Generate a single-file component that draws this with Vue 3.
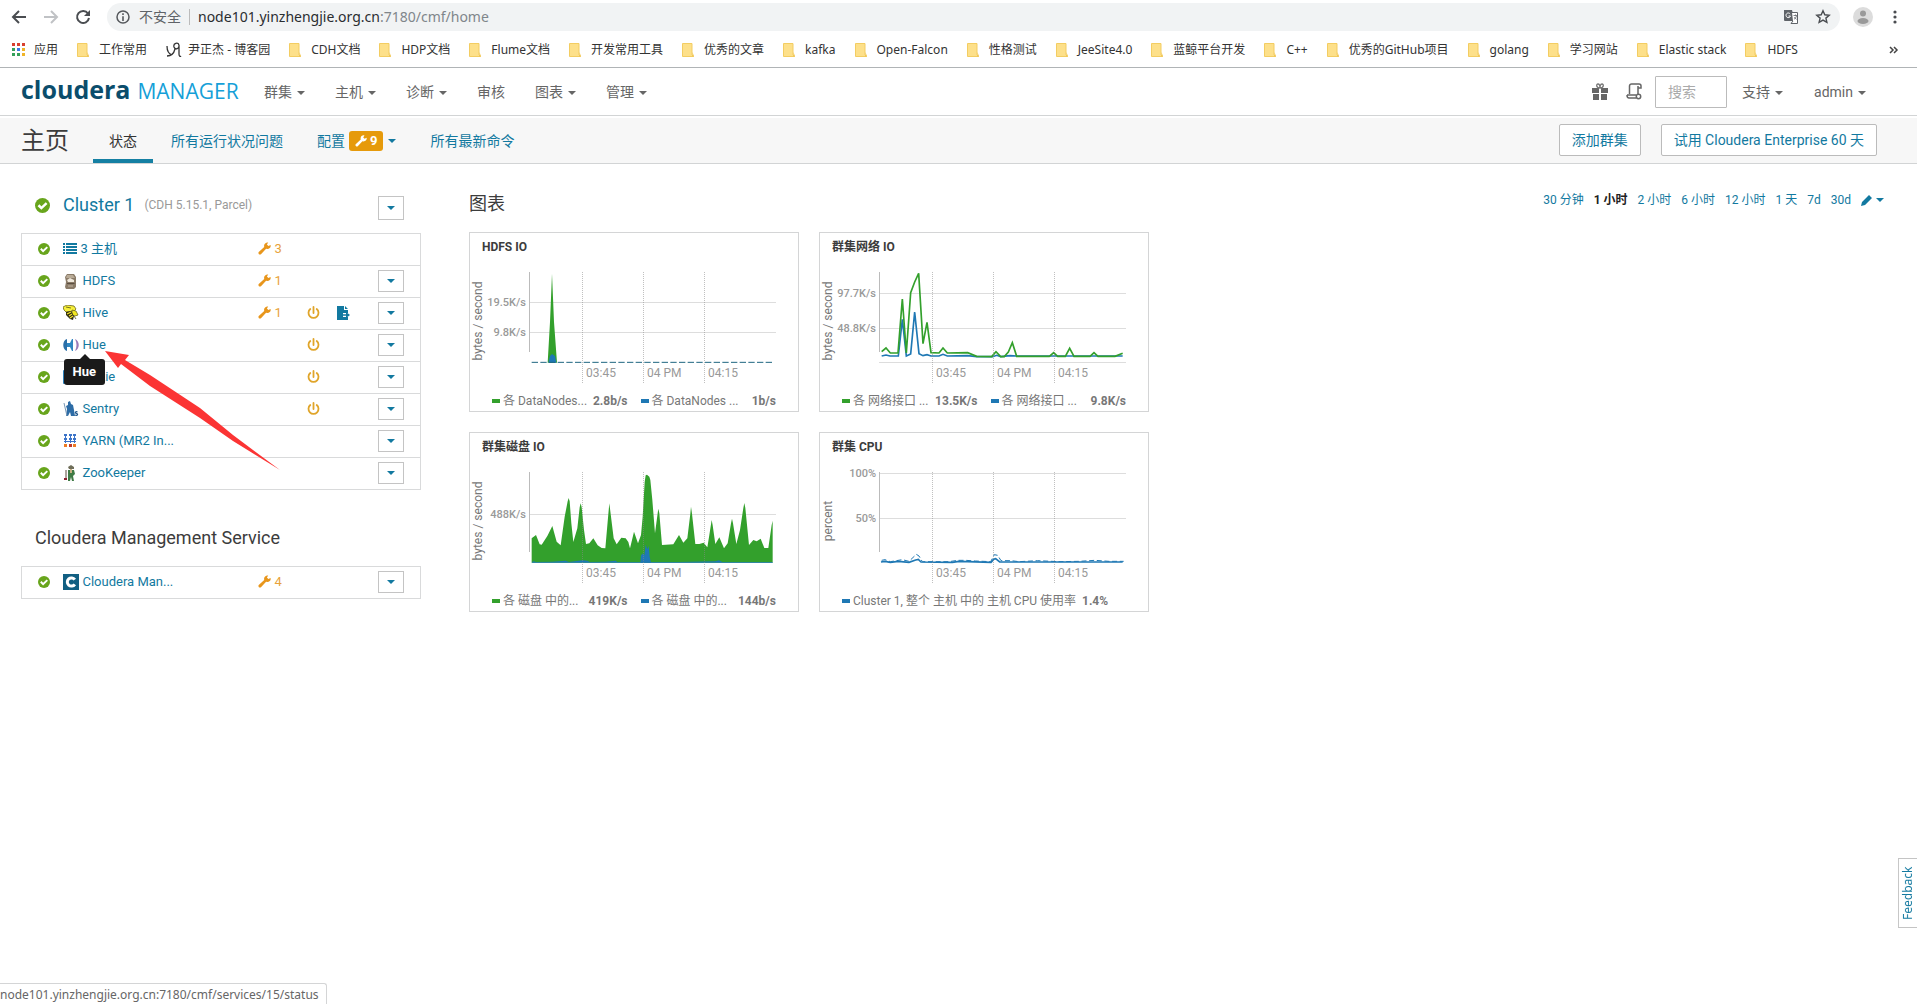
<script setup>
const bookmarks = [
  '工作常用', '尹正杰 - 博客园', 'CDH文档', 'HDP文档', 'Flume文档', '开发常用工具', '优秀的文章', 'kafka',
  'Open-Falcon', '性格测试', 'JeeSite4.0', '蓝鲸平台开发', 'C++', '优秀的GitHub项目', 'golang', '学习网站',
  'Elastic stack', 'HDFS'
]

const menus = [
  { label: '群集', caret: true },
  { label: '主机', caret: true },
  { label: '诊断', caret: true },
  { label: '审核', caret: false },
  { label: '图表', caret: true },
  { label: '管理', caret: true }
]

const groups = [
  {
    id: 'cluster',
    title: 'Cluster 1',
    note: '(CDH 5.15.1, Parcel)',
    rows: [
      { id: 'hosts', name: '3 主机', issues: 3 },
      { id: 'hdfs', name: 'HDFS', issues: 1, menu: true },
      { id: 'hive', name: 'Hive', issues: 1, restart: true, deploy: true, menu: true },
      { id: 'hue', name: 'Hue', restart: true, menu: true, tip: true },
      { id: 'oozie', name: 'Oozie', restart: true, menu: true },
      { id: 'sentry', name: 'Sentry', restart: true, menu: true },
      { id: 'yarn', name: 'YARN (MR2 In...', menu: true },
      { id: 'zookeeper', name: 'ZooKeeper', menu: true }
    ]
  },
  {
    id: 'mgmt',
    title: 'Cloudera Management Service',
    rows: [{ id: 'cm', name: 'Cloudera Man...', issues: 4, menu: true }]
  }
]

const ranges = ['30 分钟', '1 小时', '2 小时', '6 小时', '12 小时', '1 天', '7d', '30d']
const activeRange = '1 小时'

const ticks = [
  { x: 113, label: '03:45' },
  { x: 174, label: '04 PM' },
  { x: 235, label: '04:15' }
]

const green = '#33a02c'
const blue = '#1f78b4'

const charts = [
  {
    title: 'HDFS IO',
    unit: 'bytes / second',
    unitY: 89,
    grid: [{ y: 70, label: '19.5K/s' }, { y: 100, label: '9.8K/s' }],
    areas: [
      { fill: green, points: '56,272 63,150 69,5 75,150 84,272' },
      { fill: blue, points: '58,272 63,252 69,246 78,252 82,272' }
    ],
    lines: [{ color: '#1d6680', width: 3, dash: '19 7', points: '8,271 734,271' }],
    legend: [
      { color: green, label: '各 DataNodes...', value: '2.8b/s' },
      { color: blue, label: '各 DataNodes ...', value: '1b/s' }
    ]
  },
  {
    title: '群集网络 IO',
    unit: 'bytes / second',
    unitY: 89,
    grid: [{ y: 61, label: '97.7K/s' }, { y: 96, label: '48.8K/s' }, { y: 130, label: '' }],
    areas: [],
    lines: [
      { color: blue, width: 5, points: '8,252 21,249 33,252 58,252 70,142 82,252 95,246 107,120 120,245 132,251 144,248 156,252 180,252 192,247 205,252 266,251 293,254 341,254 353,250 365,254 393,251 413,252 731,252' },
      { color: green, width: 5, points: '8,239 21,228 34,243 57,243 70,81 82,243 95,62 107,30 119,4 132,215 144,151 156,242 180,243 192,228 205,243 266,242 293,253 338,254 351,239 365,254 376,254 388,240 400,212 413,253 511,253 524,242 536,253 559,253 572,229 585,253 633,253 645,242 657,253 708,253 731,244' }
    ],
    legend: [
      { color: green, label: '各 网络接口 ...', value: '13.5K/s' },
      { color: blue, label: '各 网络接口 ...', value: '9.8K/s' }
    ]
  },
  {
    title: '群集磁盘 IO',
    unit: 'bytes / second',
    unitY: 89,
    grid: [{ y: 82, label: '488K/s' }],
    areas: [
      { fill: green, points: '8,199 21,189 32,217 38,218 55,192 70,162 83,209 95,220 107,134 116,88 119,78 122,88 127,154 133,210 145,169 152,106 155,94 158,106 165,174 171,216 181,214 193,199 206,220 218,228 229,229 238,126 241,94 245,126 254,199 263,217 277,197 290,199 298,210 303,229 315,179 327,214 336,189 341,134 347,30 350,10 354,8 361,14 364,24 370,84 378,184 386,124 388,110 391,124 399,219 433,217 450,189 463,212 475,199 484,125 486,104 489,125 499,216 511,216 524,212 535,226 541,189 548,144 551,160 559,216 571,196 585,229 596,214 606,154 609,140 612,154 622,216 633,174 643,108 646,93 649,108 660,219 673,204 683,208 695,200 706,228 718,228 728,159 731,146 731,272 8,272' },
      { fill: blue, points: '334,272 336,250 342,244 346,250 350,218 355,232 359,222 362,254 366,272' },
      { fill: blue, points: '8,272 12,268 22,270 70,269 110,266 120,270 160,265 175,266 182,270 230,269 260,266 265,270 450,270 560,268 570,265 580,270 731,270 731,272' }
    ],
    lines: [],
    legend: [
      { color: green, label: '各 磁盘 中的...', value: '419K/s' },
      { color: blue, label: '各 磁盘 中的...', value: '144b/s' }
    ]
  },
  {
    title: '群集 CPU',
    unit: 'percent',
    unitY: 89,
    grid: [{ y: 41, label: '100%' }, { y: 86, label: '50%' }],
    areas: [],
    lines: [
      { color: blue, width: 3, dash: '15 8', points: '8,265 18,263 34,269 70,263 90,268 112,247 120,252 130,269 210,269 236,265 260,265 290,267 335,269 346,248 356,250 366,266 396,266 420,269 476,266 540,269 600,268 648,265 690,268 734,268' },
      { color: blue, width: 5, points: '6,270 18,268 34,271 58,268 90,271 110,264 118,262 126,270 220,271 240,268 336,271 344,262 350,260 362,270 476,270 648,270 731,270' }
    ],
    legend: [{ color: blue, label: 'Cluster 1, 整个 主机 中的 主机 CPU 使用率', value: '1.4%' }]
  }
]
</script>

<template>
  <div class="page">
    <header class="browser">
      <div class="toolbar">
        <button class="plain" aria-label="返回">
          <svg width="16" height="16" viewBox="0 0 16 16" fill="none" stroke="#4a4d51" stroke-width="2"><path d="M15 8H2M8 2L2 8l6 6" /></svg>
        </button>
        <button class="plain" aria-label="前进">
          <svg width="16" height="16" viewBox="0 0 16 16" fill="none" stroke="#c0c2c5" stroke-width="2"><path d="M1 8h13M8 2l6 6-6 6" /></svg>
        </button>
        <button class="plain" aria-label="刷新">
          <svg width="16" height="16" viewBox="0 0 16 16"><path d="M13 4.500A6 6 0 1 0 14 9" fill="none" stroke="#4a4d51" stroke-width="2" /><path d="M15 1v6H9z" fill="#4a4d51" /></svg>
        </button>
        <div class="address">
          <svg width="14" height="14" viewBox="0 0 14 14"><circle cx="7" cy="7" r="6" fill="none" stroke="#55585c" stroke-width="1.500" /><path d="M6.200 6.200h1.600V11H6.200zM6.200 3.200h1.600v1.700H6.200z" fill="#55585c" /></svg>
          <span class="unsafe">不安全</span>
          <span class="url"><b>node101.yinzhengjie.org.cn</b>:7180/cmf/home</span>
          <svg class="translate" width="16" height="16" viewBox="0 0 16 16"><path d="M1 1h8l3 11H2a1 1 0 0 1-1-1z" fill="#5f6368" /><path d="M9 3.500h5.500v11H8l2-2.500" fill="#fff" stroke="#5f6368" /><path d="M7.200 5A2.300 2.300 0 1 0 7.500 7H5.500" fill="none" stroke="#fff" /><path d="M10.500 6.500h3.500M12.500 5.500v1M13.500 7c-.5 1.700-1.500 2.700-2.500 3.300M11.300 8l2.300 2.500" fill="none" stroke="#5f6368" stroke-width=".8" /></svg>
          <svg width="16" height="16" viewBox="0 0 16 16"><path d="M8 1.800l1.800 4 4.400.4-3.300 2.900 1 4.300L8 11.100l-3.900 2.300 1-4.300L1.800 6.200l4.400-.4z" fill="none" stroke="#4a4d51" stroke-width="1.400" /></svg>
        </div>
        <button class="plain profile" aria-label="用户">
          <svg width="20" height="20" viewBox="0 0 20 20"><circle cx="10" cy="10" r="10" fill="#dcdcdc" /><circle cx="10" cy="6.500" r="3" fill="#999" /><ellipse cx="10" cy="14" rx="5.500" ry="3" fill="#999" /></svg>
        </button>
        <button class="plain" aria-label="更多">
          <svg width="4" height="16" viewBox="0 0 4 16" fill="#4a4d51"><circle cx="2" cy="3" r="1.600" /><circle cx="2" cy="8" r="1.600" /><circle cx="2" cy="13" r="1.600" /></svg>
        </button>
      </div>
      <nav class="bookmarks">
        <a href="#" class="bookmark apps">
          <svg width="13" height="13" viewBox="0 0 13 13">
            <path d="M0 0h3v3H0zM5 0h3v3H5zM10 0h3v3h-3z" fill="#d8402f" />
            <path d="M0 5h3v3H0zM0 10h3v3H0z" fill="#35a05a" /><path d="M5 5h3v3H5z" fill="#3b78e7" /><path d="M10 5h3v3h-3zM10 10h3v3h-3z" fill="#f0b429" /><path d="M5 10h3v3H5z" fill="#35a05a" />
          </svg>
          应用
        </a>
        <a v-for="(b, i) in bookmarks" :key="b" href="#" class="bookmark">
          <svg v-if="i === 1" width="16" height="16" viewBox="0 0 16 16" fill="none" stroke="#333" stroke-width="1.300"><path d="M1 4c0 5 2 8 5 9M13 3c-1-3-6-2-5 2 1 3 5 2 5-1M13 3v9c0 2 1 3 2 2M1 14c4 0 7-3 8-7" /></svg>
          <svg v-else width="16" height="16" viewBox="0 0 16 16"><path d="M.5 1.500h9.500v11l1.500 2H.5z" fill="#fde08a" stroke="#f3cd62" /><path d="M10.500 10v4.500h1.500z" fill="#f0c040" /></svg>
          {{ b }}
        </a>
        <button class="plain more" aria-label="更多书签">
          <svg width="10" height="8" viewBox="0 0 10 8" fill="none" stroke="#444" stroke-width="1.500"><path d="M1 1l3 3-3 3M5 1l3 3-3 3" /></svg>
        </button>
      </nav>
    </header>

    <div class="navbar">
      <a href="#" class="logo"><span class="brand">cloudera</span><span class="product">MANAGER</span></a>
      <nav class="menus">
        <a v-for="m in menus" :key="m.label" href="#">{{ m.label }}<i v-if="m.caret" class="caret"></i></a>
      </nav>
      <div class="tools">
        <a href="#" aria-label="包裹">
          <svg width="16" height="18" viewBox="0 0 16 18" fill="#666"><path d="M0 5h7v5H0zM9 5h7v5H9zM1 11h6v6H1zM9 11h6v6H9z" /><path d="M8 5C4 5 4 1 6 1s2 4 2 4 0-4 2-4 2 4-2 4z" fill="none" stroke="#777" stroke-width="1.300" /></svg>
        </a>
        <a href="#" aria-label="运行命令">
          <svg width="16" height="17" viewBox="0 0 16 17" fill="none" stroke="#666" stroke-width="1.500"><path d="M3.500 11V3a2 2 0 0 1 2-2H13a2 2 0 0 1 2 2v2h-3M12 3v8M1 12h9M1 12c0 2 1 3 2 3h7" /><circle cx="12.500" cy="13.500" r="2.200" /></svg>
        </a>
        <input type="search" placeholder="搜索" aria-label="搜索" />
        <a href="#" class="text">支持<i class="caret"></i></a>
        <a href="#" class="text user">admin<i class="caret"></i></a>
      </div>
    </div>

    <div class="subbar">
      <h1>主页</h1>
      <nav class="tabs">
        <a href="#" class="active">状态</a>
        <a href="#">所有运行状况问题</a>
        <a href="#">配置<span class="badge"><svg width="12" height="12" viewBox="0 0 14 14"><path d="M13.500 3.200l-2.300 1.200-1.600-1.600L11 .5C9 0 6.500 1.500 6.500 4l.2 1.300L.8 10.800c-1.200 1.400.9 3.600 2.400 2.400l5.500-5.900 1.300.2c2.700 0 4.200-2.300 3.500-4.300z" fill="#fff" /></svg>9</span><i class="caret"></i></a>
        <a href="#">所有最新命令</a>
      </nav>
      <div class="actions">
        <button>添加群集</button>
        <button>试用 Cloudera Enterprise 60 天</button>
      </div>
    </div>

    <main>
      <aside>
        <section v-for="g in groups" :key="g.id" :class="g.id">
          <div class="group-head">
            <svg v-if="g.note" class="ok" width="15" height="15" viewBox="0 0 12 12"><circle cx="6" cy="6" r="6" fill="#68a51c" /><path d="M2.800 5.800l2.300 2.300 4.200-4" fill="none" stroke="#fff" stroke-width="2" /></svg>
            <h2><a v-if="g.note" href="#">{{ g.title }}</a><template v-else>{{ g.title }}</template></h2>
            <span v-if="g.note" class="note">{{ g.note }}</span>
            <button v-if="g.note" class="drop tall" aria-label="群集操作"><i class="caret"></i></button>
          </div>
          <table>
            <colgroup><col class="c-state" /><col class="c-name" /><col class="c-issues" /><col class="c-icon" /><col class="c-deploy" /><col /></colgroup>
            <tbody>
              <tr v-for="r in g.rows" :key="r.id">
                <td class="state"><svg width="12" height="12" viewBox="0 0 12 12"><circle cx="6" cy="6" r="6" fill="#68a51c" /><path d="M2.800 5.800l2.300 2.300 4.200-4" fill="none" stroke="#fff" stroke-width="2" /></svg></td>
                <td>
                  <a href="#" class="service">
                    <svg v-if="r.id === 'hosts'" width="14" height="11" viewBox="0 0 14 11" fill="#1279a0"><path d="M0 0h2v2H0zM3 0h11v2H3zM0 3h2v2H0zM3 3h11v2H3zM0 6h2v2H0zM3 6h11v2H3zM0 9h2v2H0zM3 9h11v2H3z" /></svg>
                    <svg v-else-if="r.id === 'hdfs'" width="16" height="16" viewBox="0 0 16 16"><path d="M4 1h7l2 3v10l-2 2H3l-1-2 1-5-1-5z" fill="#8a7b68" /><path d="M4 2h6l2 3H3z" fill="#b9ab97" /><path d="M4 7l3-2 4 2v2H5z" fill="#efe8dc" /><path d="M4 10h7l1 1H4z" fill="#5b4e40" /><path d="M5 13h5" stroke="#c2b5a3" /></svg>
                    <svg v-else-if="r.id === 'hive'" width="16" height="16" viewBox="0 0 16 16"><path d="M0 2l4-2 7 1 2 3-2 2-8 1-2-2z" fill="#f7f03a" stroke="#6b6620" stroke-width=".8" /><path d="M9 5l4 1 2 4-3 1-3-1z" fill="#f2e71f" stroke="#6b6620" stroke-width=".8" /><path d="M3 7l5-1 3 5-1 4-3-1-4-4z" fill="#302c10" /><path d="M4 9l4-2M6 11l3-2M7 13l3-2" stroke="#f6e52a" stroke-width="1.200" /><path d="M3 2l5 1M11 11l2 3" stroke="#555014" stroke-width=".8" /></svg>
                    <svg v-else-if="r.id === 'hue'" width="16" height="16" viewBox="0 0 16 16"><path d="M4 2v12C-1 13-1 3 4 2z" fill="#2b6fa8" /><path d="M4 6h3l2-4h1v12H9l-2-4H4z" fill="#2f86c1" /><path d="M12 2c5 2 5 10 0 12 2-4 2-8 0-12z" fill="#9b7bb8" /></svg>
                    <svg v-else-if="r.id === 'oozie'" width="16" height="16" viewBox="0 0 16 16"><rect y="1" width="15" height="14" rx="1" fill="#2d7fb8" /></svg>
                    <svg v-else-if="r.id === 'sentry'" width="16" height="16" viewBox="0 0 16 16"><path d="M5 1l2-1 1 3 2 1 1 5 1 6H8L7 11l-2 4H3l1-7-1-3 2-1z" fill="#2d6ca6" /><path d="M1 2l3 13" stroke="#7897b5" /><path d="M14.500 11c-2-1-3 1-1 1.500s1 2.500-1.500 1.500" fill="none" stroke="#1d5489" stroke-width="1.200" /></svg>
                    <svg v-else-if="r.id === 'yarn'" width="16" height="16" viewBox="0 0 16 16"><path d="M1 1h3v2H1zM6 1h3v2H6zM10 1h3v2h-3zM1 5h3v2H1zM6 5h3v2H6zM10 5h3v2h-3zM2 2h1v8H2zM7 2h1v8H7zM11 2h1v8h-1zM1 8h12v1H1z" fill="#3b73c8" /><path d="M1 11h3v3H1zM10 11h3v3h-3z" fill="#ee7a23" /><path d="M6 11h3v3H6z" fill="#c0392b" /></svg>
                    <svg v-else-if="r.id === 'zookeeper'" width="16" height="16" viewBox="0 0 16 16"><path d="M5 2l3-2 3 2v2H6z" fill="#6e6d58" /><path d="M5 5h6l1 4-2 2 1 5H9l-1-4-1 4H5z" fill="#3f7a45" /><path d="M3 5v8" stroke="#5b4a3d" /><path d="M1 13h3v2H1z" fill="#8c2332" /><path d="M7 4h2v4H7z" fill="#c8b184" /></svg>
                    <svg v-else width="16" height="16" viewBox="0 0 16 16"><path d="M0 0h16v16H0z" fill="#115f82" /><path d="M11.800 10.300A4.100 4.100 0 1 1 11.800 5.700" fill="none" stroke="#fff" stroke-width="3" /></svg>
                    {{ r.name }}
                    <span v-if="r.tip" class="tip" role="tooltip">{{ r.name }}</span>
                  </a>
                </td>
                <td>
                  <a v-if="r.issues" href="#" class="issues"><svg width="13" height="13" viewBox="0 0 14 14"><path d="M13.500 3.200l-2.300 1.200-1.600-1.600L11 .5C9 0 6.500 1.500 6.500 4l.2 1.300L.8 10.800c-1.200 1.400.9 3.600 2.400 2.400l5.500-5.900 1.300.2c2.700 0 4.200-2.300 3.500-4.300z" fill="#e8961c" /></svg>{{ r.issues }}</a>
                </td>
                <td>
                  <a v-if="r.restart" href="#" aria-label="需要重启"><svg width="13" height="14" viewBox="0 0 13 14" fill="none" stroke="#e0a52a" stroke-width="1.800" stroke-linecap="round"><path d="M6.500 1v6M3.300 3a5 5 0 1 0 6.400 0" /></svg></a>
                </td>
                <td>
                  <a v-if="r.deploy" href="#" aria-label="部署客户端配置"><svg width="13" height="14" viewBox="0 0 13 14"><path d="M0 0h7v4h4v3H6v4h5v3H0zM8 0l3 3H8z" fill="#1279a0" /><path d="M6 9h4" stroke="#1279a0" stroke-width="1.500" /><path d="M9 6l4 3-4 3z" fill="#1279a0" /></svg></a>
                </td>
                <td><button v-if="r.menu" class="drop" :aria-label="r.name"><i class="caret"></i></button></td>
              </tr>
            </tbody>
          </table>
        </section>
      </aside>

      <section class="charts">
        <div class="charts-head">
          <h2>图表</h2>
          <nav class="ranges">
            <a v-for="r in ranges" :key="r" href="#" :class="{ active: r === activeRange }">{{ r }}</a>
            <a href="#" class="edit" aria-label="编辑">
              <svg width="11" height="11" viewBox="0 0 11 11" fill="#1279a0"><path d="M0 11l1-4 6-6 3 3-6 6zM8 0l3 3-1 1-3-3z" /></svg><i class="caret"></i>
            </a>
          </nav>
        </div>
        <div class="cards">
          <article v-for="c in charts" :key="c.title" class="card">
            <h3>{{ c.title }}</h3>
            <svg class="plot" width="328" height="125" viewBox="1 30 328 125">
              <text class="unit" text-anchor="middle" :transform="`translate(13 ${c.unitY}) rotate(-90)`">{{ c.unit }}</text>
              <g v-for="g in c.grid" :key="g.y">
                <path class="grid" :d="`M60 ${g.y}.5H307`" />
                <text class="value" text-anchor="end" x="57" :y="g.y + 4">{{ g.label }}</text>
              </g>
              <path class="axis" d="M60.500 40V120" />
              <svg x="60" y="40" width="248" height="112" viewBox="0 0 744 336">
                <polygon v-for="a in c.areas" :key="a.points" :points="a.points" :fill="a.fill" />
                <polyline v-for="l in c.lines" :key="l.points" :points="l.points" fill="none" :stroke="l.color" :stroke-width="l.width" :stroke-dasharray="l.dash" />
              </svg>
              <g v-for="t in ticks" :key="t.x">
                <path class="grid vertical" :d="`M${t.x}.5 40V152`" />
                <text class="tick" :x="t.x + 4" y="145">{{ t.label }}</text>
              </g>
            </svg>
            <div class="legend">
              <div v-for="(l, i) in c.legend" :key="i" class="item" :class="{ wide: c.legend.length === 1 }">
                <i class="swatch" :style="{ background: l.color }"></i>
                <span>{{ l.label }}</span>
                <b>{{ l.value }}</b>
              </div>
            </div>
          </article>
        </div>
      </section>
    </main>

    <svg class="pointer" width="180" height="122" viewBox="0 0 180 122"><path d="M0 0L24 4 20 9 45 24 95 57 128 84 175 119 128 90 95 67 45 35 16 13 13 17z" fill="#fb3434" /></svg>
    <button class="feedback">Feedback</button>
    <div class="status">node101.yinzhengjie.org.cn:7180/cmf/services/15/status</div>
  </div>
</template>

<style>
body {
  margin: 0;
  background: #fff;
}
</style>

<style scoped>
.page {
  position: relative;
  min-height: 100vh;
  font: 13px/20px Roboto, "Noto Sans CJK SC", sans-serif;
  color: #3c3c3c;
}
.page * {
  box-sizing: border-box;
}
a {
  color: #1279a0;
  text-decoration: none;
}
svg {
  display: block;
  flex: none;
}
svg text {
  font-family: Roboto, "Noto Sans CJK SC", sans-serif;
}
button {
  font: inherit;
  cursor: pointer;
}
h1, h2, h3 {
  margin: 0;
  font-weight: 400;
}
.plain {
  padding: 0;
  border: 0;
  background: none;
}
.caret {
  display: inline-block;
  border: 4px solid transparent;
  border-top-color: currentColor;
  border-bottom: 0;
}

.browser {
  font-family: "Noto Sans", "Noto Sans CJK SC", sans-serif;
  border-bottom: 1px solid #b0b4b6;
}
.toolbar {
  display: flex;
  align-items: center;
  gap: 16px;
  height: 34px;
  padding: 0 20px 0 11px;
}
.address {
  display: flex;
  flex: 1;
  align-items: center;
  height: 28px;
  margin-right: -3px;
  padding: 0 9px;
  border-radius: 14px;
  background: #f1f3f4;
  font-size: 14px;
}
.unsafe {
  margin-left: 9px;
  padding-right: 8px;
  border-right: 1px solid #bbb;
  line-height: 16px;
  color: #5f6368;
}
.url {
  flex: 1;
  margin-left: 8px;
  color: #80868b;
}
.url b {
  font-weight: 400;
  color: #2a2d30;
}
.translate {
  margin-right: 16px;
}
.profile {
  margin-right: 4px;
}
.bookmarks {
  display: flex;
  align-items: center;
  gap: 19px;
  height: 33px;
  padding: 0 18px 2px 12px;
  font-size: 12px;
}
.bookmark {
  display: flex;
  align-items: center;
  gap: 6px;
  color: #333;
  white-space: nowrap;
}
.apps {
  gap: 9px;
}
.more {
  margin-left: auto;
}

.navbar {
  display: flex;
  align-items: center;
  height: 48px;
  padding: 0 51px 0 21px;
  border-bottom: 1px solid #d2d4d5;
  font-size: 14px;
}
.logo {
  display: flex;
  align-items: baseline;
  gap: 7px;
  width: 243px;
  padding-bottom: 3px;
  font-family: "Open Sans", sans-serif;
  line-height: 32px;
}
.brand {
  font-size: 25px;
  font-weight: 700;
  color: #0b4d6c;
}
.product {
  font-size: 21px;
  color: #15a0d8;
}
.menus {
  display: flex;
  gap: 30px;
}
.menus a, .text {
  color: #666;
  white-space: nowrap;
}
.navbar .caret {
  margin: 0 0 2px 5px;
}
.tools {
  display: flex;
  align-items: center;
  margin-left: auto;
}
.tools a + a {
  margin-left: 18px;
}
.tools input {
  width: 72px;
  height: 32px;
  margin: 0 15px 0 13px;
  padding: 0 12px;
  border: 1px solid #bbb;
  border-radius: 1px;
  background: #fff;
  font: inherit;
}
.tools input::placeholder {
  color: #aaa;
}
.tools .user {
  margin-left: 31px;
}

.subbar {
  display: flex;
  align-items: center;
  height: 46px;
  margin-top: 2px;
  padding: 0 40px 0 21px;
  border-bottom: 1px solid #d2d4d5;
  background: #f7f7f7;
  font-size: 14px;
}
h1 {
  width: 72px;
  font-size: 24px;
  line-height: 32px;
}
.tabs {
  display: flex;
  align-self: stretch;
  gap: 2px;
}
.tabs a {
  display: flex;
  align-items: center;
  padding: 4px 16px 0;
  border-bottom: 4px solid transparent;
}
.tabs .active {
  border-color: #1580a3;
  color: #333;
}
.tabs .caret {
  margin-left: 5px;
}
.badge {
  display: flex;
  align-items: center;
  gap: 3px;
  height: 20px;
  margin-left: 4px;
  padding: 0 6px;
  border-radius: 3px;
  background: #e69a0b;
  color: #fff;
  font-size: 13px;
  font-weight: 700;
}
.actions {
  display: flex;
  gap: 20px;
  margin: 0 0 2px auto;
}
.actions button {
  height: 32px;
  padding: 0 12px;
  border: 1px solid #bbb;
  border-radius: 2px;
  background: #fff;
  color: #1279a0;
  white-space: nowrap;
}

main {
  display: flex;
  align-items: flex-start;
  gap: 48px;
  padding: 24px 33px 0 21px;
}
aside {
  flex: none;
  width: 400px;
}
.group-head {
  display: flex;
  align-items: center;
  height: 45px;
  padding: 0 17px 11px 14px;
}
.mgmt {
  margin-top: 31px;
}
h2 {
  font-size: 18px;
  line-height: 24px;
}
.ok {
  margin-right: 13px;
}
.note {
  margin-left: 10px;
  font-size: 12px;
  color: #999;
}
.drop {
  display: flex;
  align-items: center;
  justify-content: center;
  width: 26px;
  height: 22px;
  padding: 0;
  border: 1px solid #c4c4c4;
  background: #fff;
  color: #1279a0;
}
.tall {
  align-self: flex-start;
  height: 24px;
  margin: 8px 0 0 auto;
}
table {
  width: 100%;
  table-layout: fixed;
  border: 1px solid #d9dadb;
  border-collapse: collapse;
}
.c-state {
  width: 41px;
}
.c-name {
  width: 195px;
}
.c-issues {
  width: 49px;
}
.c-icon {
  width: 30px;
}
.c-deploy {
  width: 41px;
}
td {
  height: 32px;
  padding: 0 0 2px;
  border-bottom: 1px solid #d9dadb;
}
.state {
  padding-left: 16px;
}
.service {
  display: flex;
  position: relative;
  align-items: center;
  gap: 4px;
  width: max-content;
}
.issues {
  display: flex;
  align-items: center;
  gap: 4px;
  color: #e8a23a;
}
.tip {
  position: absolute;
  top: 24px;
  left: 1px;
  z-index: 1;
  padding: 3px 9px;
  border-radius: 3px;
  background: #1a1a1a;
  color: #fff;
  font-weight: 700;
}
.tip::before {
  content: "";
  position: absolute;
  top: -5px;
  left: 16px;
  border: 5px solid transparent;
  border-top: 0;
  border-bottom-color: #1a1a1a;
}

.charts {
  flex: 1;
}
.charts-head {
  display: flex;
  align-items: center;
  justify-content: space-between;
  height: 44px;
  padding-bottom: 12px;
}
.ranges {
  display: flex;
  gap: 10px;
  padding-bottom: 8px;
  font-size: 12px;
}
.ranges .active {
  color: #222;
  font-weight: 700;
}
.edit {
  display: flex;
  align-items: center;
  gap: 4px;
}
.cards {
  display: grid;
  grid-template-columns: 330px 330px;
  gap: 20px;
}
.card {
  height: 180px;
  border: 1px solid #d4d5d6;
}
h3 {
  padding: 4px 12px 5px;
  font-size: 12px;
  font-weight: 700;
}
.plot .grid {
  stroke: #ddd;
  fill: none;
}
.plot .vertical {
  stroke: #8888;
  stroke-dasharray: 1 1;
}
.plot .axis {
  stroke: #bbb;
}
.tick {
  font-size: 12px;
  fill: #999;
}
.value {
  font-size: 11px;
  font-weight: 500;
  fill: #999;
}
.unit {
  font-size: 12px;
  fill: #777;
}
.legend {
  display: flex;
  gap: 13px;
  padding: 4px 22px 0;
  font-size: 12px;
  color: #777;
  white-space: nowrap;
}
.item {
  display: flex;
  align-items: center;
  gap: 3px;
  width: 136px;
}
.item b {
  margin-left: auto;
}
.wide {
  width: auto;
}
.wide b {
  margin-left: 3px;
}
.swatch {
  flex: none;
  width: 8px;
  height: 4px;
}

.pointer {
  position: absolute;
  top: 351px;
  left: 105px;
  z-index: 2;
  pointer-events: none;
}
.feedback {
  position: fixed;
  top: 858px;
  right: -1px;
  width: 20px;
  height: 70px;
  padding: 0;
  border: 1px solid #c4c4c4;
  background: #fff;
  color: #1279a0;
  font: 12px/14px "Noto Sans", sans-serif;
  writing-mode: vertical-rl;
  transform: rotate(180deg);
}
.status {
  position: fixed;
  bottom: 0;
  left: 0;
  height: 21px;
  padding: 1px 7px 0 0;
  border: 1px solid #d4d5d6;
  border-width: 1px 1px 0 0;
  border-radius: 0 3px 0 0;
  background: #fff;
  color: #666;
  font: 12px/20px "Noto Sans", sans-serif;
}
</style>
